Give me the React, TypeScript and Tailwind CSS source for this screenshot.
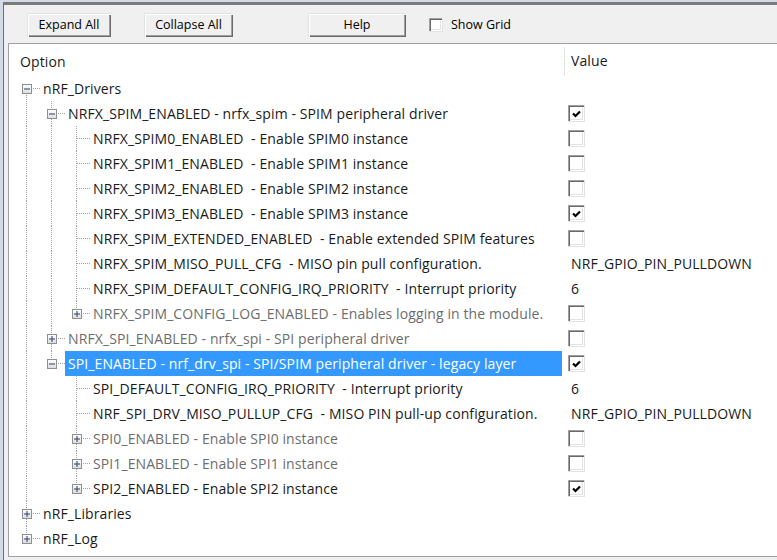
import React from 'react';

type Guide = 'I' | ' ' | 'T' | 'L' | 'R';
type Row = {
  guides: Guide[];
  exp?: '+' | '-';
  text: string;
  grey?: boolean;
  value?: boolean | string;
  selected?: boolean;
};

const rows: Row[] = [
  { guides: ['R'], exp: '-', text: 'nRF_Drivers' },
  { guides: ['I', 'T'], exp: '-', text: 'NRFX_SPIM_ENABLED - nrfx_spim - SPIM peripheral driver', value: true },
  { guides: ['I', 'I', 'T'], text: 'NRFX_SPIM0_ENABLED  - Enable SPIM0 instance', value: false },
  { guides: ['I', 'I', 'T'], text: 'NRFX_SPIM1_ENABLED  - Enable SPIM1 instance', value: false },
  { guides: ['I', 'I', 'T'], text: 'NRFX_SPIM2_ENABLED  - Enable SPIM2 instance', value: false },
  { guides: ['I', 'I', 'T'], text: 'NRFX_SPIM3_ENABLED  - Enable SPIM3 instance', value: true },
  { guides: ['I', 'I', 'T'], text: 'NRFX_SPIM_EXTENDED_ENABLED  - Enable extended SPIM features', value: false },
  { guides: ['I', 'I', 'T'], text: 'NRFX_SPIM_MISO_PULL_CFG  - MISO pin pull configuration.', value: 'NRF_GPIO_PIN_PULLDOWN' },
  { guides: ['I', 'I', 'T'], text: 'NRFX_SPIM_DEFAULT_CONFIG_IRQ_PRIORITY  - Interrupt priority', value: '6' },
  { guides: ['I', 'I', 'L'], exp: '+', grey: true, text: 'NRFX_SPIM_CONFIG_LOG_ENABLED - Enables logging in the module.', value: false },
  { guides: ['I', 'T'], exp: '+', grey: true, text: 'NRFX_SPI_ENABLED - nrfx_spi - SPI peripheral driver', value: false },
  { guides: ['I', 'L'], exp: '-', selected: true, text: 'SPI_ENABLED - nrf_drv_spi - SPI/SPIM peripheral driver - legacy layer', value: true },
  { guides: ['I', ' ', 'T'], text: 'SPI_DEFAULT_CONFIG_IRQ_PRIORITY  - Interrupt priority', value: '6' },
  { guides: ['I', ' ', 'T'], text: 'NRF_SPI_DRV_MISO_PULLUP_CFG  - MISO PIN pull-up configuration.', value: 'NRF_GPIO_PIN_PULLDOWN' },
  { guides: ['I', ' ', 'T'], exp: '+', grey: true, text: 'SPI0_ENABLED - Enable SPI0 instance', value: false },
  { guides: ['I', ' ', 'T'], exp: '+', grey: true, text: 'SPI1_ENABLED - Enable SPI1 instance', value: false },
  { guides: ['I', ' ', 'L'], exp: '+', text: 'SPI2_ENABLED - Enable SPI2 instance', value: true },
  { guides: ['T'], exp: '+', text: 'nRF_Libraries' },
  { guides: ['L'], exp: '+', text: 'nRF_Log' },
];

const LINE = '#a0a0a0';

function GuideCell({ g, own, exp }: { g: Guide; own: boolean; exp?: '+' | '-' }) {
  const w = own ? 26 : 25;
  return (
    <svg width={w} height={25} className="block shrink-0">
      {(g === 'I' || g === 'T') && (
        <line x1={12.5} y1={0} x2={12.5} y2={25} stroke={LINE} strokeWidth={1} strokeDasharray="1 1" />
      )}
      {g === 'L' && <line x1={12.5} y1={0} x2={12.5} y2={12.5} stroke={LINE} strokeWidth={1} strokeDasharray="1 1" />}
      {g === 'R' && <line x1={12.5} y1={13} x2={12.5} y2={25} stroke={LINE} strokeWidth={1} strokeDasharray="1 1" />}
      {own && g !== ' ' && (
        <line x1={13} y1={12.5} x2={w} y2={12.5} stroke={LINE} strokeWidth={1} strokeDasharray="1 1" />
      )}
      {own && exp && (
        <g>
          <defs>
            <linearGradient id="expg" x1="0" y1="0" x2="0" y2="1">
              <stop offset="0" stopColor="#ffffff" />
              <stop offset="1" stopColor="#dcdcdc" />
            </linearGradient>
          </defs>
          <rect x={8.5} y={8.5} width={9} height={9} fill="url(#expg)" stroke="#8f8f8f" strokeWidth={1} />
          <line x1={10} y1={13} x2={16} y2={13} stroke="#2b3f66" strokeWidth={1} />
          {exp === '+' && <line x1={13} y1={10} x2={13} y2={16} stroke="#2b3f66" strokeWidth={1} />}
        </g>
      )}
    </svg>
  );
}

function CheckBox({ checked, size = 17 }: { checked: boolean; size?: number }) {
  return (
    <div
      className="flex shrink-0 items-center justify-center bg-white shadow-[inset_1px_1px_0_#a0a0a0,inset_2px_2px_0_#696969,inset_-1px_-1px_0_#ffffff,inset_-2px_-2px_0_#e3e3e3] border-r border-b border-[#e3e3e3]"
      style={{ width: size, height: size }}
    >
      {checked && (
        <svg width={9} height={8} viewBox="0 0 9 8" className="mt-[1px] ml-[1px]">
          <path d="M1 3.5 L3.5 6 L8 1.5" stroke="#000" strokeWidth={2.2} fill="none" />
        </svg>
      )}
    </div>
  );
}

function Button({ label, w }: { label: string; w: string }) {
  return (
    <div
      className={`${w} h-[24px] flex items-center justify-center pt-[1px] bg-[#f0f0f0] text-[12.5px] text-black shadow-[inset_1px_1px_0_#e3e3e3,inset_2px_2px_0_#ffffff,inset_-1px_-1px_0_#696969,inset_-2px_-2px_0_#a0a0a0]`}
    >
      {label}
    </div>
  );
}

export default function App() {
  return (
    <div
      className="w-[777px] h-[560px] overflow-hidden bg-[#d3dbe6] pt-[2px] pl-[3px] flex flex-col"
      style={{ fontFamily: '"Open Sans", "Noto Sans", Arial, sans-serif' }}
    >
      <div className="flex-1 flex flex-col border-t-[3px] border-t-[#7b7b7b] border-l border-l-[#6e6e6e] bg-[#f0f0f0] min-h-0">
        {/* Toolbar */}
        <div className="h-[38px] shrink-0 flex items-start pt-[8px] pl-[23px]">
          <div className="flex items-center">
            <Button label="Expand All" w="w-[84px]" />
            <div className="ml-[33px]">
              <Button label="Collapse All" w="w-[89px]" />
            </div>
            <div className="ml-[75px]">
              <Button label="Help" w="w-[98px]" />
            </div>
            <div className="ml-[23px]">
              <CheckBox checked={false} size={14} />
            </div>
            <span className="ml-[8px] pt-[1px] text-[12.5px] text-black">Show Grid</span>
          </div>
        </div>
        {/* Panel */}
        <div className="flex-1 ml-[4px] mb-[3px] bg-white border-t border-l border-b border-[#a0a0a0] min-h-0 overflow-hidden text-[14px] tracking-[0.1px] text-[#1a1a1a]">
          {/* Header */}
          <div className="h-[32px] flex">
            <div className="w-[556px] shrink-0 flex pt-[3px]">
              <div className="flex-1 flex items-center pl-[11px] border-r border-[#e5e5e5]">Option</div>
            </div>
            <div className="flex items-center pl-[6px] pt-[1px]">Value</div>
          </div>
          {/* Rows */}
          {rows.map((r, i) => (
            <div key={i} className="h-[25px] flex">
              <div className="w-[556px] shrink-0 flex pl-[5px] pr-[3px]">
                {r.guides.map((g, j) => (
                  <GuideCell key={j} g={g} own={j === r.guides.length - 1} exp={j === r.guides.length - 1 ? r.exp : undefined} />
                ))}
                <div
                  className={`flex-1 flex items-center pl-[3px] pb-[1px] whitespace-pre ${
                    r.selected ? 'bg-[#3399ff] text-white' : r.grey ? 'text-[#6d6d6d]' : ''
                  }`}
                >
                  {r.text}
                </div>
              </div>
              <div className="flex items-center">
                {typeof r.value === 'boolean' && (
                  <div className="pl-[3px]">
                    <CheckBox checked={r.value} />
                  </div>
                )}
                {typeof r.value === 'string' && <span className="pl-[6px] pb-[1px]">{r.value}</span>}
              </div>
            </div>
          ))}
        </div>
      </div>
    </div>
  );
}
